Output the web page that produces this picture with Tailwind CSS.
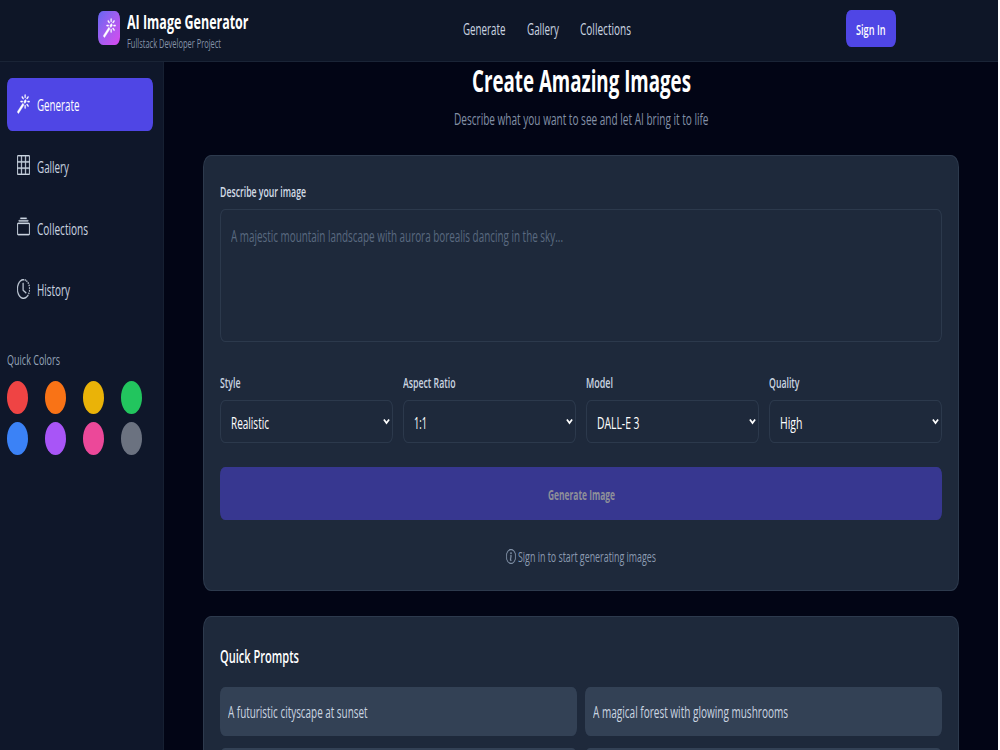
<!DOCTYPE html>
<html lang="en">
<head>
<meta charset="utf-8">
<title>AI Image Generator</title>
<script src="https://cdn.jsdelivr.net/npm/@tailwindcss/browser@4"></script>
</head>
<body class="h-[750px] overflow-hidden bg-white font-['Open_Sans','Noto_Sans',sans-serif] font-medium">
<svg class="hidden">
  <symbol id="magic" viewBox="0 0 16 16" preserveAspectRatio="none"><path d="M9.5 2.672a.5.5 0 1 0 1 0V.843a.5.5 0 0 0-1 0zm4.5.035A.5.5 0 0 0 13.293 2L12 3.293a.5.5 0 1 0 .707.707zM7.293 4A.5.5 0 1 0 8 3.293L6.707 2A.5.5 0 0 0 6 2.707zm-.621 2.5a.5.5 0 1 0 0-1H4.843a.5.5 0 1 0 0 1zm8.485 0a.5.5 0 1 0 0-1h-1.829a.5.5 0 0 0 0 1zM13.293 10A.5.5 0 1 0 14 9.293L12.707 8a.5.5 0 1 0-.707.707zM9.5 11.157a.5.5 0 0 0 1 0V9.328a.5.5 0 0 0-1 0zm1.854-5.097a.5.5 0 0 0 0-.706l-.708-.708a.5.5 0 0 0-.707 0L8.646 5.94a.5.5 0 0 0 0 .707l.708.708a.5.5 0 0 0 .707 0l1.293-1.293Zm-3 3a.5.5 0 0 0 0-.706l-.708-.708a.5.5 0 0 0-.707 0L.646 13.94a.5.5 0 0 0 0 .707l.707.707a.5.5 0 0 0 .707 0z"/></symbol>
  <symbol id="grid" viewBox="0 0 16 16" preserveAspectRatio="none"><path d="M0 1.5A1.5 1.5 0 0 1 1.5 0h13A1.5 1.5 0 0 1 16 1.5v13a1.5 1.5 0 0 1-1.5 1.5h-13A1.5 1.5 0 0 1 0 14.5zM1.5 1a.5.5 0 0 0-.5.5V5h4V1zM5 6H1v4h4zm1 4h4V6H6zm-1 1H1v3.5a.5.5 0 0 0 .5.5H5zm1 0v4h4v-4zm5 0v4h3.5a.5.5 0 0 0 .5-.5V11zm0-1h4V6h-4zm0-5h4V1.5a.5.5 0 0 0-.5-.5H11zm-1 0V1H6v4z"/></symbol>
  <symbol id="collection" viewBox="0 0 16 16" preserveAspectRatio="none"><path d="M2.5 3.5a.5.5 0 0 1 0-1h11a.5.5 0 0 1 0 1zm2-2a.5.5 0 0 1 0-1h7a.5.5 0 0 1 0 1zM0 13a1.5 1.5 0 0 0 1.5 1.5h13A1.5 1.5 0 0 0 16 13V6a1.5 1.5 0 0 0-1.5-1.5h-13A1.5 1.5 0 0 0 0 6zm1.5.5A.5.5 0 0 1 1 13V6a.5.5 0 0 1 .5-.5h13a.5.5 0 0 1 .5.5v7a.5.5 0 0 1-.5.5z"/></symbol>
  <symbol id="history" viewBox="0 0 16 16" preserveAspectRatio="none"><path d="M8.515 1.019A7 7 0 0 0 8 1V0a8 8 0 0 1 .589.022zm2.004.45a7 7 0 0 0-.985-.299l.219-.976q.576.129 1.126.342zm1.37.71a7 7 0 0 0-.439-.27l.493-.87a8 8 0 0 1 .979.654l-.615.789a7 7 0 0 0-.418-.302zm1.834 1.79a7 7 0 0 0-.653-.796l.724-.69q.406.429.747.91zm.744 1.352a7 7 0 0 0-.214-.468l.893-.45a8 8 0 0 1 .45 1.088l-.95.313a7 7 0 0 0-.179-.483m.53 2.507a7 7 0 0 0-.1-1.025l.985-.17q.1.58.116 1.17zm-.131 1.538q.05-.254.081-.51l.993.123a8 8 0 0 1-.23 1.155l-.964-.267q.069-.247.12-.501m-.952 2.379q.276-.436.486-.908l.914.405q-.24.54-.555 1.038zm-.964 1.205q.183-.183.35-.378l.758.653a8 8 0 0 1-.401.432z"/><path d="M8 1a7 7 0 1 0 4.95 11.95l.707.707A8.001 8.001 0 1 1 8 0z"/><path d="M7.5 3a.5.5 0 0 1 .5.5v5.21l3.248 1.856a.5.5 0 0 1-.496.868l-3.5-2A.5.5 0 0 1 7 9V3.5a.5.5 0 0 1 .5-.5"/></symbol>
  <symbol id="info" viewBox="0 0 16 16" preserveAspectRatio="none"><path d="M8 15A7 7 0 1 1 8 1a7 7 0 0 1 0 14m0 1A8 8 0 1 0 8 0a8 8 0 0 0 0 16"/><path d="m8.93 6.588-2.29.287-.082.38.45.083c.294.07.352.176.288.469l-.738 3.468c-.194.897.105 1.319.808 1.319.545 0 1.178-.252 1.465-.598l.088-.416c-.2.176-.492.246-.686.246-.275 0-.375-.193-.304-.533zM9 4.5a1 1 0 1 1-2 0 1 1 0 0 1 2 0"/></symbol>
  <symbol id="chev" viewBox="0 0 7 7" preserveAspectRatio="none"><path d="M.9 1.5 3.5 5 6.1 1.5" fill="none" stroke="currentColor" stroke-width="1.7"/></symbol>
</svg>

<div class="flex h-[750px] w-[998px] flex-col overflow-hidden bg-[#020515]">
  <header class="flex h-[62px] shrink-0 border-b border-[#1a2436] bg-[#0e1627]">
    <div class="flex w-[463px] shrink-0 pl-[98px]">
      <div class="mt-[11px] flex h-[34px] w-[22px] items-center justify-center rounded-[5px/8px] bg-linear-to-br from-[#6366f1] to-[#d946ef] text-white"><svg class="h-[20px] w-[13px] fill-current stroke-current stroke-[0.4]"><use href="#magic"/></svg></div>
      <div class="ml-[7px] flex flex-col pt-[8px]">
        <div class="h-[28px] text-[20px] leading-[28px] font-bold text-white"><span data-w="121.5">AI Image Generator</span></div>
        <div class="h-[16px] text-[12px] leading-[16px] text-[#8593a8]"><span data-w="94">Fullstack Developer Project</span></div>
      </div>
    </div>
    <nav class="flex w-[383px] shrink-0 gap-[21px] text-[16px] leading-[58px] text-[#cbd5e1]">
      <span data-w="42.5">Generate</span><span data-w="32">Gallery</span><span data-w="51">Collections</span>
    </nav>
    <button class="mt-[10px] flex h-[37px] w-[50px] items-center justify-center rounded-[5px/8px] bg-[#4f46e5] pt-px text-[14px] font-semibold text-white"><span data-w="29.5">Sign In</span></button>
  </header>

  <div class="flex min-h-0 flex-1">
    <aside class="w-[164px] shrink-0 border-r border-[#162032] bg-[#0f172a] pt-[16px] pl-[7px]">
      <nav class="flex flex-col gap-[8.7px] text-[16px] text-[#cbd5e1]">
        <a class="flex h-[53px] w-[146px] items-center rounded-[5px/8px] bg-[#4f46e5] pl-[10px] text-white"><svg class="mb-[2px] h-[20px] w-[13px] fill-current stroke-current stroke-[0.4]"><use href="#magic"/></svg><span class="ml-[7px] pt-px" data-w="42.5">Generate</span></a>
        <a class="flex h-[53px] w-[146px] items-center pl-[10px]"><svg class="mb-[2px] h-[20px] w-[13px] fill-current stroke-current stroke-[0.3]"><use href="#grid"/></svg><span class="ml-[7px] pt-[2px]" data-w="32">Gallery</span></a>
        <a class="flex h-[53px] w-[146px] items-center pl-[10px]"><svg class="mb-[2px] h-[20px] w-[13px] fill-current stroke-current stroke-[0.3]"><use href="#collection"/></svg><span class="ml-[7px] pt-[2px]" data-w="51">Collections</span></a>
        <a class="flex h-[53px] w-[146px] items-center pl-[10px]"><svg class="mb-[2px] h-[20px] w-[13px] fill-current stroke-current stroke-[0.3]"><use href="#history"/></svg><span class="ml-[7px] pt-px" data-w="33">History</span></a>
      </nav>
      <div class="mt-[34px] h-[20px] text-[14px] leading-[20px] text-[#94a3b8]"><span data-w="53">Quick Colors</span></div>
      <div class="mt-[11px] grid w-[152px] grid-cols-4 gap-y-[8.3px]">
        <i class="h-[33px] w-[21px] rounded-[50%] bg-[#ef4444]"></i><i class="h-[33px] w-[21px] rounded-[50%] bg-[#f97316]"></i><i class="h-[33px] w-[21px] rounded-[50%] bg-[#eab308]"></i><i class="h-[33px] w-[21px] rounded-[50%] bg-[#22c55e]"></i>
        <i class="h-[33px] w-[21px] rounded-[50%] bg-[#3b82f6]"></i><i class="h-[33px] w-[21px] rounded-[50%] bg-[#a855f7]"></i><i class="h-[33px] w-[21px] rounded-[50%] bg-[#ec4899]"></i><i class="h-[33px] w-[21px] rounded-[50%] bg-[#6b7280]"></i>
      </div>
    </aside>

    <main class="flex flex-1 flex-col pl-[39px]">
      <div class="flex h-[93px] w-[756px] shrink-0 flex-col items-center">
        <h1 class="h-[38px] text-[30px] leading-[38px] font-bold text-white"><span data-w="219">Create Amazing Images</span></h1>
        <p class="mt-[7px] h-[24px] text-[16px] leading-[24px] text-[#8391a7]"><span data-w="254.5">Describe what you want to see and let AI bring it to life</span></p>
      </div>

      <section class="flex h-[436px] w-[756px] shrink-0 flex-col rounded-[8px/12px] border border-[#334155]/70 bg-[#1e293b] px-[16px] pt-[26px]">
        <label class="h-[20px] text-[14px] leading-[20px] font-semibold text-[#d3dce7]"><span data-w="86">Describe your image</span></label>
        <div class="mt-[7px] h-[133px] shrink-0 rounded-[5px/8px] border border-[#2c394c] pt-[14px] pl-[10px] text-[16px] leading-[24px] text-[#5a6980]"><span data-w="332">A majestic mountain landscape with aurora borealis dancing in the sky...</span></div>
        <div class="mt-[31px] grid grid-cols-4 gap-x-[10px] text-[14px] leading-[20px] font-semibold text-[#cbd5e1]">
          <label><span data-w="20.5">Style</span></label><label><span data-w="52.5">Aspect Ratio</span></label><label><span data-w="27">Model</span></label><label><span data-w="30.5">Quality</span></label>
        </div>
        <div class="mt-[7px] grid shrink-0 grid-cols-4 gap-x-[10px] text-[16px] text-white">
          <div class="flex h-[43px] items-center justify-between rounded-[5px/8px] border border-[#2c394c] pr-[2px] pl-[10px]"><span class="pt-[3px]" data-w="38">Realistic</span><svg class="h-[7px] w-[7px]"><use href="#chev"/></svg></div>
          <div class="flex h-[43px] items-center justify-between rounded-[5px/8px] border border-[#2c394c] pr-[2px] pl-[10px]"><span class="pt-[3px]" data-w="13">1:1</span><svg class="h-[7px] w-[7px]"><use href="#chev"/></svg></div>
          <div class="flex h-[43px] items-center justify-between rounded-[5px/8px] border border-[#2c394c] pr-[2px] pl-[10px]"><span class="pt-[3px]" data-w="42.5">DALL-E 3</span><svg class="h-[7px] w-[7px]"><use href="#chev"/></svg></div>
          <div class="flex h-[43px] items-center justify-between rounded-[5px/8px] border border-[#2c394c] pr-[2px] pl-[10px]"><span class="pt-[3px]" data-w="22.5">High</span><svg class="h-[7px] w-[7px]"><use href="#chev"/></svg></div>
        </div>
        <button class="mt-[24px] flex h-[53px] shrink-0 items-center justify-center rounded-[5px/8px] bg-[#373790] pt-px text-[14px] font-bold text-[#8f9099]"><span data-w="67">Generate Image</span></button>
        <div class="mt-[26px] flex h-[20px] items-center justify-center text-[14px] text-[#8b9ab0]"><svg class="mr-[2px] h-[15px] w-[10px] fill-current stroke-current stroke-[0.3]"><use href="#info"/></svg><span data-w="138">Sign in to start generating images</span></div>
      </section>

      <section class="mt-[25px] flex h-[300px] w-[756px] shrink-0 flex-col rounded-[8px/12px] border border-[#334155]/70 bg-[#1e293b] px-[16px] pt-[25px]">
        <h2 class="h-[28px] text-[18px] leading-[28px] font-semibold text-white"><span data-w="79">Quick Prompts</span></h2>
        <div class="mt-[17px] grid grid-cols-2 gap-x-[8px] gap-y-[12px] text-[16px] text-[#cbd5e1]">
          <div class="flex h-[49px] items-center rounded-[5px/8px] bg-[#334155] pt-px pl-[8px]"><span data-w="139.5">A futuristic cityscape at sunset</span></div>
          <div class="flex h-[49px] items-center rounded-[5px/8px] bg-[#334155] pt-px pl-[8px]"><span data-w="195">A magical forest with glowing mushrooms</span></div>
          <div class="h-[49px] rounded-[5px/8px] bg-[#334155]"></div>
          <div class="h-[49px] rounded-[5px/8px] bg-[#334155]"></div>
        </div>
      </section>
    </main>
  </div>
</div>
<script>
  // Condense each label horizontally to the width given in data-w.
  function fit() {
    document.querySelectorAll('[data-w]').forEach(function (el) {
      var s = el.style;
      s.display = 'inline-block';
      s.whiteSpace = 'nowrap';
      s.flexShrink = '0';
      s.transformOrigin = '0 50%';
      s.transform = 'none';
      s.marginRight = '0px';
      var target = parseFloat(el.dataset.w), w = el.getBoundingClientRect().width;
      s.marginRight = (target - w) + 'px';
      s.transform = 'scaleX(' + target / w + ')';
    });
  }
  fit();
  window.addEventListener('load', fit);
  document.fonts.ready.then(fit);
  new ResizeObserver(fit).observe(document.querySelector('h1 span'));
  setTimeout(fit, 50);
</script>
</body>
</html>
